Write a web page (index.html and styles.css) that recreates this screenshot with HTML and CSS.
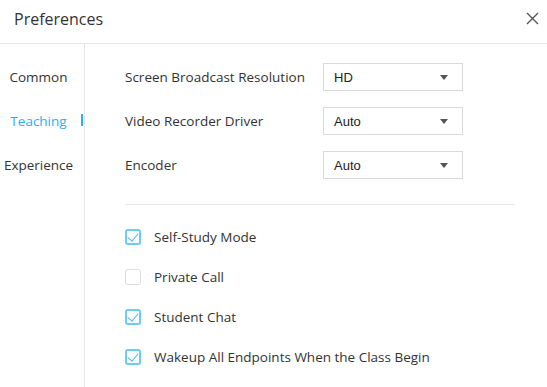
FILE: index.html
```html
<!DOCTYPE html>
<html lang="en">
<head>
    <meta charset="UTF-8">
    <meta name="viewport" content="width=device-width, initial-scale=1.0">
    <title>Preferences</title>
    <link rel="stylesheet" href="styles.css">
</head>
<body>
    <div class="dialog">
        <div class="header">
            <div class="title">Preferences</div>
            <div class="close-btn">
                <svg width="13" height="13" viewBox="0 0 13 13">
                    <path d="M1 1 L12 12 M12 1 L1 12" stroke="#555" stroke-width="1.4" fill="none"/>
                </svg>
            </div>
        </div>

        <div class="body">
            <div class="sidebar">
                <div class="nav-item">Common</div>
                <div class="nav-item active">Teaching</div>
                <div class="nav-item">Experience</div>
            </div>

            <div class="content">
                <div class="form-row">
                    <div class="label">Screen Broadcast Resolution</div>
                    <div class="select">
                        <span>HD</span>
                        <span class="arrow"></span>
                    </div>
                </div>
                <div class="form-row">
                    <div class="label">Video Recorder Driver</div>
                    <div class="select">
                        <span>Auto</span>
                        <span class="arrow"></span>
                    </div>
                </div>
                <div class="form-row">
                    <div class="label">Encoder</div>
                    <div class="select">
                        <span>Auto</span>
                        <span class="arrow"></span>
                    </div>
                </div>

                <div class="divider"></div>

                <div class="check-row">
                    <span class="checkbox checked"></span>
                    <span>Self-Study Mode</span>
                </div>
                <div class="check-row">
                    <span class="checkbox"></span>
                    <span>Private Call</span>
                </div>
                <div class="check-row">
                    <span class="checkbox checked"></span>
                    <span>Student Chat</span>
                </div>
                <div class="check-row">
                    <span class="checkbox checked"></span>
                    <span>Wakeup All Endpoints When the Class Begin</span>
                </div>
            </div>
        </div>
    </div>
</body>
</html>
```

FILE: styles.css
```css
* {
    margin: 0;
    padding: 0;
    box-sizing: border-box;
}

body {
    font-family: 'Open Sans', 'Noto Sans', sans-serif;
    background: #fff;
    color: #333;
    width: 547px;
    height: 387px;
    overflow: hidden;
}

.header {
    height: 44px;
    border-bottom: 1px solid #e6e6e6;
    display: flex;
    justify-content: space-between;
    align-items: center;
    padding: 0 8px 6px 14px;
}

.title {
    font-size: 16px;
    color: #333;
}

.close-btn {
    display: flex;
    align-items: center;
    cursor: pointer;
}

.body {
    display: flex;
    height: 343px;
}

.sidebar {
    width: 85px;
    border-right: 1px solid #e6e6e6;
    padding-top: 11px;
}

.nav-item {
    height: 44px;
    display: flex;
    align-items: center;
    justify-content: center;
    font-size: 13.5px;
    color: #333;
    position: relative;
    padding-right: 7px;
    cursor: pointer;
}

.nav-item.active {
    color: #2bb0f0;
}

.nav-item.active::after {
    content: '';
    position: absolute;
    right: 1px;
    top: 15px;
    width: 2px;
    height: 12px;
    background: #2bb0f0;
}

.content {
    flex: 1;
    padding: 19px 32px 0 40px;
}

.form-row {
    display: flex;
    align-items: center;
    height: 28px;
    margin-bottom: 16px;
}

.label {
    width: 198px;
    font-size: 13.5px;
}

.select {
    width: 140px;
    height: 28px;
    border: 1px solid #d9d9d9;
    display: flex;
    align-items: center;
    justify-content: space-between;
    padding: 0 14px 0 10px;
    font-family: 'Liberation Sans', Arial, sans-serif;
    font-size: 13px;
    color: #222;
}

.arrow {
    width: 0;
    height: 0;
    border-left: 4px solid transparent;
    border-right: 4px solid transparent;
    border-top: 5px solid #555;
}

.divider {
    height: 1px;
    background: #e6e6e6;
    margin: 25px 0 22px;
}

.check-row {
    display: flex;
    align-items: center;
    height: 20px;
    margin-bottom: 20px;
    font-size: 13.5px;
}

.checkbox {
    width: 16px;
    height: 16px;
    border: 1px solid #dcdcdc;
    border-radius: 3px;
    margin-right: 13px;
    position: relative;
}

.checkbox.checked {
    border: 2px solid #6ccaf7;
}

.checkbox.checked::after {
    content: '';
    position: absolute;
    left: 3px;
    top: 0px;
    width: 5px;
    height: 9px;
    border-right: 1.5px solid #4dbcf3;
    border-bottom: 1.5px solid #4dbcf3;
    transform: rotate(40deg);
}
```
